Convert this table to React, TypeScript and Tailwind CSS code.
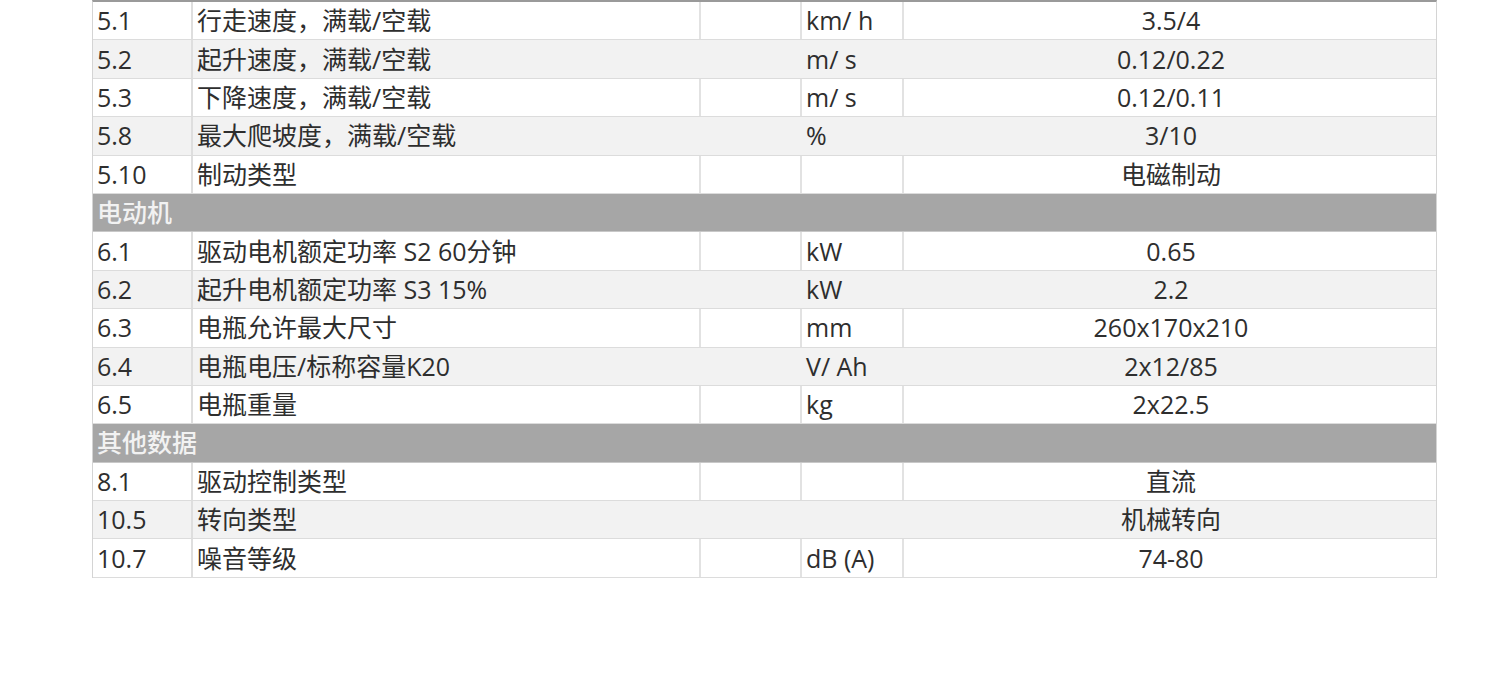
type SpecRow =
  | { kind: "section"; title: string }
  | { kind: "item"; no: string; name: string; unit: string; value: string; shaded: boolean };

const rows: SpecRow[] = [
  { kind: "item", no: "5.1", name: "行走速度，满载/空载", unit: "km/ h", value: "3.5/4", shaded: false },
  { kind: "item", no: "5.2", name: "起升速度，满载/空载", unit: "m/ s", value: "0.12/0.22", shaded: true },
  { kind: "item", no: "5.3", name: "下降速度，满载/空载", unit: "m/ s", value: "0.12/0.11", shaded: false },
  { kind: "item", no: "5.8", name: "最大爬坡度，满载/空载", unit: "%", value: "3/10", shaded: true },
  { kind: "item", no: "5.10", name: "制动类型", unit: "", value: "电磁制动", shaded: false },
  { kind: "section", title: "电动机" },
  { kind: "item", no: "6.1", name: "驱动电机额定功率 S2 60分钟", unit: "kW", value: "0.65", shaded: false },
  { kind: "item", no: "6.2", name: "起升电机额定功率 S3 15%", unit: "kW", value: "2.2", shaded: true },
  { kind: "item", no: "6.3", name: "电瓶允许最大尺寸", unit: "mm", value: "260x170x210", shaded: false },
  { kind: "item", no: "6.4", name: "电瓶电压/标称容量K20", unit: "V/ Ah", value: "2x12/85", shaded: true },
  { kind: "item", no: "6.5", name: "电瓶重量", unit: "kg", value: "2x22.5", shaded: false },
  { kind: "section", title: "其他数据" },
  { kind: "item", no: "8.1", name: "驱动控制类型", unit: "", value: "直流", shaded: false },
  { kind: "item", no: "10.5", name: "转向类型", unit: "", value: "机械转向", shaded: true },
  { kind: "item", no: "10.7", name: "噪音等级", unit: "dB (A)", value: "74-80", shaded: false },
];

const cols = "grid grid-cols-[100px_508px_101px_102px_534px]";

export default function App() {
  return (
    <div
      className="h-[687px] w-[1500px] overflow-hidden bg-white pl-[92px] text-[25px] text-[#2e2e2e]"
      style={{ fontFamily: '"Open Sans", "Noto Sans CJK SC", sans-serif' }}
    >
      <div className="w-[1345px] border-t-2 border-r border-l border-t-[#9a9a9a] border-r-[#d4d4d4] border-l-[#d4d4d4]">
        {rows.map((row, i) =>
          row.kind === "section" ? (
            <div
              key={i}
              className="flex h-[38.4px] items-center border-b border-[#c8c8c8] bg-[#a6a6a6] pl-[4px] font-medium text-[#f2f2f2]"
            >
              {row.title}
            </div>
          ) : (
            <div
              key={i}
              className={`${cols} h-[38.4px] border-b border-[#dcdcdc] leading-none ${
                row.shaded ? "bg-[#f2f2f2]" : "bg-white"
              }`}
            >
              <div className="flex items-center border-r-2 border-[#dedede] pl-[4px]">{row.no}</div>
              <div
                className={`flex items-center border-r-2 pl-[4px] ${
                  row.shaded ? "border-[#f2f2f2]" : "border-[#e2e2e2]"
                }`}
              >
                {row.name}
              </div>
              <div className={`border-r-2 ${row.shaded ? "border-[#f2f2f2]" : "border-[#e2e2e2]"}`} />
              <div
                className={`flex items-center border-r-2 pl-[4px] ${
                  row.shaded ? "border-[#f2f2f2]" : "border-[#e2e2e2]"
                }`}
              >
                {row.unit}
              </div>
              <div className="flex items-center justify-center">{row.value}</div>
            </div>
          )
        )}
      </div>
    </div>
  );
}
